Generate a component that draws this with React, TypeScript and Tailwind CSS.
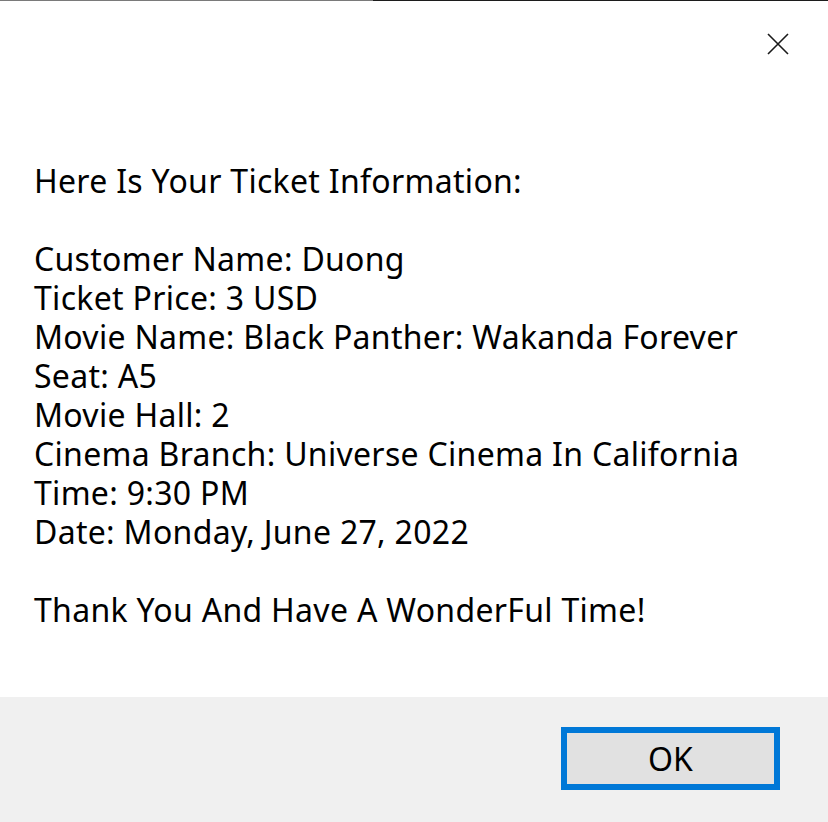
const lines = [
  'Here Is Your Ticket Information:',
  '',
  'Customer Name: Duong',
  'Ticket Price: 3 USD',
  'Movie Name: Black Panther: Wakanda Forever',
  'Seat: A5',
  'Movie Hall: 2',
  'Cinema Branch: Universe Cinema In California',
  'Time: 9:30 PM',
  'Date: Monday, June 27, 2022',
  '',
  'Thank You And Have A WonderFul Time!',
];

export default function App() {
  return (
    <div
      className="w-[828px] h-[822px] bg-white flex flex-col overflow-hidden text-black"
      style={{ fontFamily: '"Noto Sans", "Open Sans", sans-serif' }}
    >
      {/* window top edge */}
      <div className="flex h-px shrink-0">
        <div className="w-[373px] bg-[#7a7a7a]" />
        <div className="flex-1 bg-[#1c1c1c]" />
      </div>

      {/* title bar */}
      <div className="h-[86px] shrink-0 flex justify-end items-start pt-[32px] pr-[39px]">
        <svg width="22" height="22" viewBox="0 0 22 22" className="text-[#1a1a1a]">
          <path d="M1 1 L21 21 M21 1 L1 21" stroke="currentColor" strokeWidth="1.6" fill="none" />
        </svg>
      </div>

      {/* message */}
      <div className="flex-1 pl-[34px] pt-[74px] text-[32px] leading-[39px] tracking-[0.3px]">
        {lines.map((line, i) => (
          <div key={i} className="h-[39px] whitespace-pre">
            {line}
          </div>
        ))}
      </div>

      {/* button area */}
      <div className="h-[125px] shrink-0 bg-[#f0f0f0] flex items-start justify-end pt-[30px] pr-[48px]">
        <button className="w-[219px] h-[63px] border-[6px] border-[#0078d7] bg-[#e1e1e1] text-[32px] leading-none flex items-center justify-center">
          OK
        </button>
      </div>
    </div>
  );
}
